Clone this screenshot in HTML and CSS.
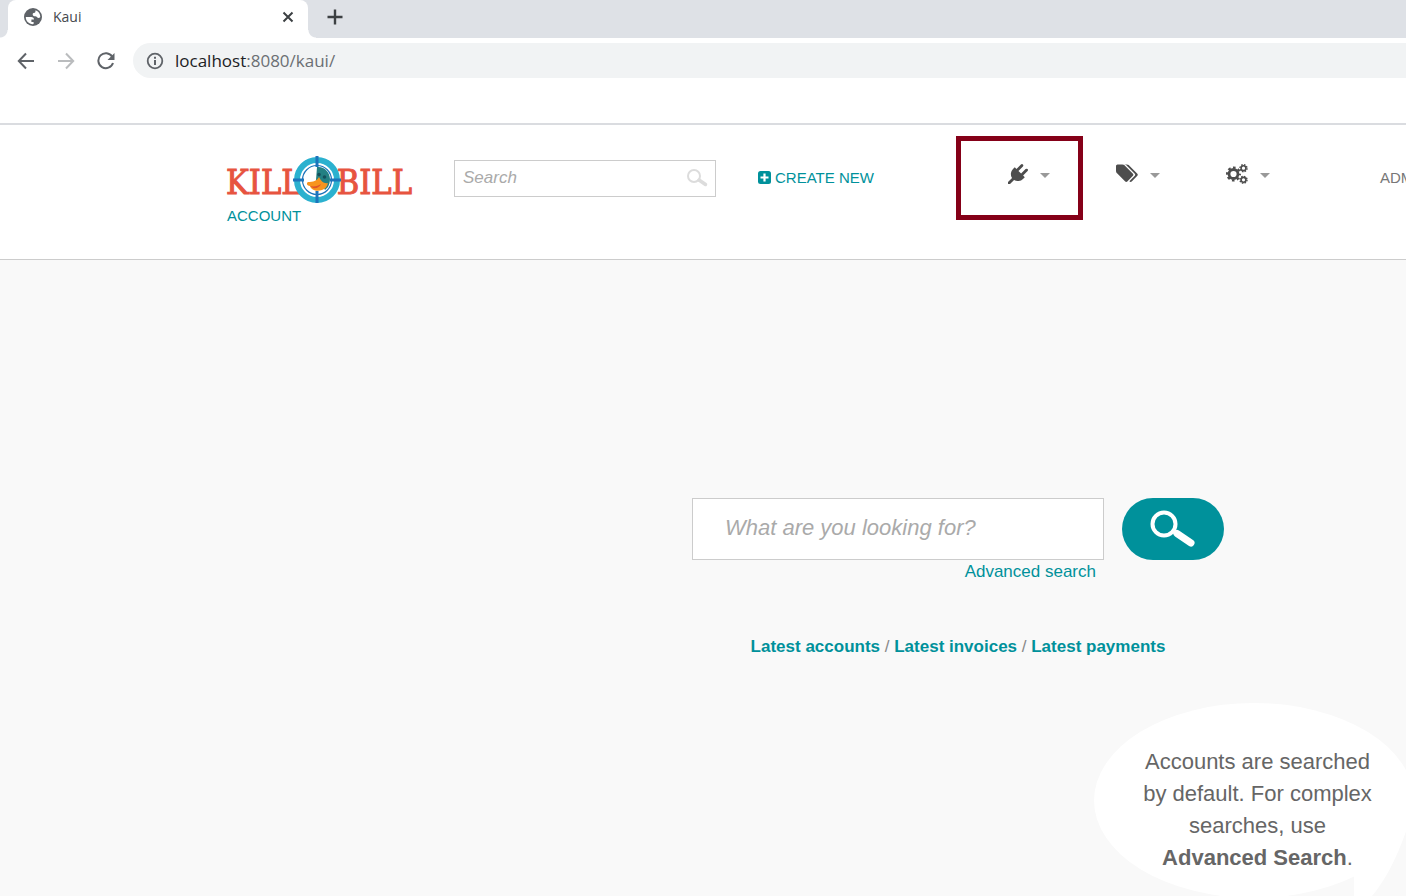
FILE: index.html
```html
<!DOCTYPE html>
<html lang="en">
<head>
<meta charset="utf-8">
<title>Kaui</title>
<link rel="stylesheet" href="styles.css">
</head>
<body>
<div class="browser">
  <div class="tab-strip">
    <div class="tab">
      <svg class="tab-icon" viewBox="0 0 18 18" aria-hidden="true"><circle cx="9" cy="9" r="9" fill="#5f6368"/><path d="M1.800 9h5.400c1.800 0 2.800 1 2.800 2.600H7.400v2.300H9.600v2.200C5 16.500 1.700 13 1.800 9ZM11.500 2.300c3 1 4.800 3.700 4.800 6.700-1 1.400-2.500 1.200-3.200.2-.5-1-1.200-1-2.800-1-2-.1-2.300-3.300.1-3.400.8 0 1.100-.6 1.100-2.500Z" fill="#fff"/></svg>
      <span class="tab-title">Kaui</span>
      <button class="icon-button" aria-label="Close tab"><svg width="12" height="12" viewBox="0 0 12 12"><path d="M1.500 1.500l9 9M10.500 1.500l-9 9" stroke="#3c4043" stroke-width="2"/></svg></button>
    </div>
    <button class="icon-button new-tab" aria-label="New tab"><svg width="16" height="16" viewBox="0 0 16 16"><path d="M8 .5v15M.5 8h15" stroke="#3c4043" stroke-width="2.400"/></svg></button>
  </div>
  <div class="toolbar">
    <button class="icon-button" aria-label="Back"><svg width="18" height="18" viewBox="0 0 18 18"><path d="M17 9H2M9 1.500L1.800 9 9 16.500" fill="none" stroke="#5f6368" stroke-width="2"/></svg></button>
    <button class="icon-button" aria-label="Forward"><svg width="18" height="18" viewBox="0 0 18 18"><path d="M1 9h15M9 1.500L16.200 9 9 16.500" fill="none" stroke="#babcbe" stroke-width="2"/></svg></button>
    <button class="icon-button" aria-label="Reload"><svg width="18" height="18" viewBox="0 0 18 18"><path d="M15.200 4.600A7.500 7.500 0 1 0 16 11" fill="none" stroke="#5f6368" stroke-width="2"/><path d="M17.500 1v7h-7Z" fill="#5f6368"/></svg></button>
    <div class="address">
      <svg width="18" height="18" viewBox="0 0 18 18" aria-hidden="true"><circle cx="9" cy="9" r="7.300" fill="none" stroke="#5f6368" stroke-width="1.800"/><path d="M9 8v5M9 4.800v2" stroke="#5f6368" stroke-width="2"/></svg>
      <span>localhost<span class="address-path">:8080/kaui/</span></span>
    </div>
  </div>
</div>
<header class="site-header">
  <div class="brand">
    <a href="#" class="logo" aria-label="Kill Bill">
      <svg width="186" height="48" viewBox="0 0 186 48">
        <text class="logo-text" x="-1" y="38">KILL</text>
        <text class="logo-text" x="185" y="38" text-anchor="end">BILL</text>
        <circle cx="90" cy="24" r="20" fill="#fff" stroke="#2bb1cf" stroke-width="6"/>
        <circle cx="90" cy="24" r="14.500" fill="#fff" stroke="#1c75bc" stroke-width="1.200"/>
        <path d="M90 11c7-1 13 5 13 12 0 3-1 6-2 8l-3 3c-2-4-4-7-9-10Z" fill="#238083"/>
        <path d="M92 21c-2 4-6 5-11 5-2 1-1 4 2 4 1 4 7 6 12 4 3-1 5-3 6-7-4 1-7-2-9-6Z" fill="#f7941e"/>
        <path d="M83 30c4 1 8 0 11-2-1 3-5 5-8 4Z" fill="#e0542a"/>
        <circle cx="92" cy="18.500" r="1.800" fill="#154f5b"/><circle cx="97.500" cy="21" r="1.800" fill="#154f5b"/>
        <path d="M90 0v11M90 35v12M66 24h11M103 24h11" stroke="#1c75bc" stroke-width="3"/>
      </svg>
    </a>
    <a href="#" class="account">ACCOUNT</a>
  </div>
  <form class="quick-search">
    <input type="search" placeholder="Search" aria-label="Search">
    <button class="icon-button" aria-label="Submit search"><svg width="22" height="18" viewBox="0 0 22 18"><circle cx="8" cy="7" r="6" fill="none" stroke="#dcdcdc" stroke-width="2"/><path d="M13 11l6.500 4.500" stroke="#dcdcdc" stroke-width="3.500" stroke-linecap="round"/></svg></button>
  </form>
  <a href="#" class="create"><svg width="13" height="13" viewBox="0 0 13 13" aria-hidden="true"><rect width="13" height="13" rx="2.500" fill="#00919b"/><path d="M6.500 2.500v8M2.500 6.500h8" stroke="#fff" stroke-width="2.200"/></svg>CREATE NEW</a>
  <nav class="menus">
    <button class="menu highlighted" aria-label="Plugins"><svg width="20" height="20" viewBox="0 0 1792 1792"><path transform="translate(0 1536) scale(1 -1)" d="M1755 1083q37 -38 37 -90.500t-37 -90.500l-401 -400l150 -150l-160 -160q-163 -163 -389.500 -186.500t-411.500 100.500l-362 -362h-181v181l362 362q-124 185 -100.500 411.500t186.500 389.500l160 160l150 -150l400 401q38 37 91 37t90 -37t37 -90.500t-37 -90.500l-400 -401l234 -234l401 400q38 37 91 37t90 -37z"/></svg><span class="caret"></span></button>
    <button class="menu" aria-label="Tags"><svg width="22" height="20" viewBox="0 0 1920 1745"><path transform="translate(0 1456) scale(1 -1)" d="M448 1088q0 -53 -37.500 -90.500t-90.500 -37.500t-90.500 37.500t-37.500 90.500t37.500 90.500t90.500 37.500t90.500 -37.500t37.500 -90.500zM1515 512q0 -53 -37 -90l-491 -492q-39 -37 -91 -37q-53 0 -90 37l-715 716q-38 37 -64.500 101t-26.500 117v416q0 52 38 90t90 38h416q53 0 117 -26.500t102 -64.500l715 -714q37 -39 37 -91zM1899 512q0 -53 -37 -90l-491 -492q-39 -37 -91 -37q-36 0 -59 14t-53 45l470 470q37 37 37 90q0 52 -37 91l-715 714q-38 38 -102 64.500t-117 26.500h224q53 0 117 -26.500t102 -64.500l715 -714q37 -39 37 -91z"/></svg><span class="caret"></span></button>
    <button class="menu" aria-label="Settings"><svg width="22" height="20" viewBox="0 0 22 20"><g fill="none" stroke="#4d4d4d"><circle cx="7.500" cy="10" r="4.500" stroke-width="2.800"/><circle cx="7.500" cy="10" r="6.400" stroke-width="2.200" stroke-dasharray="2.600 2.427" stroke-dashoffset="1.300"/><circle cx="17.500" cy="4.200" r="2.400" stroke-width="1.600"/><circle cx="17.500" cy="4.200" r="3.500" stroke-width="1.400" stroke-dasharray="1.500 1.249"/><circle cx="17.500" cy="15.800" r="2.400" stroke-width="1.600"/><circle cx="17.500" cy="15.800" r="3.500" stroke-width="1.400" stroke-dasharray="1.500 1.249"/></g></svg><span class="caret"></span></button>
  </nav>
  <a href="#" class="user">ADMIN</a>
</header>
<main class="home">
  <form class="hero-search">
    <div class="hero-field">
      <input type="search" placeholder="What are you looking for?" aria-label="What are you looking for?">
      <a href="#">Advanced search</a>
    </div>
    <button class="hero-button" aria-label="Search"><svg width="48" height="38" viewBox="0 0 48 38"><circle cx="15" cy="14" r="11.500" fill="none" stroke="#fff" stroke-width="4"/><path d="M23 20l5 3.500" stroke="#fff" stroke-width="4.500"/><path d="M28 23.500l14 9.500" stroke="#fff" stroke-width="7" stroke-linecap="round"/></svg></button>
  </form>
  <p class="latest"><a href="#">Latest accounts</a> / <a href="#">Latest invoices</a> / <a href="#">Latest payments</a></p>
  <aside class="bubble">
    <svg class="bubble-shape" viewBox="0 0 320 210" aria-hidden="true"><ellipse cx="160" cy="97.500" rx="160" ry="97.500" fill="#fff"/><path d="M260 165V210C288 190 306 150 318 110Z" fill="#fff"/></svg>
    <p>Accounts are searched<br>by default. For complex<br>searches, use<br><strong>Advanced Search</strong>.</p>
  </aside>
</main>
</body>
</html>
```
FILE: styles.css
```css
* { box-sizing: border-box; }
body {
  margin: 0;
  min-height: 100vh;
  display: flex;
  flex-direction: column;
  overflow: hidden;
  background: #f9f9f9;
  color: #666;
  font-family: "Liberation Sans", Arial, sans-serif;
  font-size: 15px;
}
a { color: #00919b; text-decoration: none; }
svg { display: block; flex: none; }
button { font: inherit; cursor: pointer; }
input { font: inherit; appearance: none; border-radius: 0; outline: none; }
input::placeholder { color: #aaa; font-style: italic; opacity: 1; }
.icon-button { display: block; padding: 0; border: 0; background: none; }

.browser {
  background: #fff;
  border-bottom: 2px solid #dadce0;
  padding-bottom: 45px;
  font-family: "Open Sans", "Noto Sans", sans-serif;
}
.tab-strip {
  display: flex;
  align-items: center;
  height: 38px;
  padding-left: 8px;
  background: #dee1e6;
}
.tab {
  position: relative;
  display: flex;
  align-items: center;
  width: 300px;
  height: 38px;
  padding: 0 14px 4px 16px;
  border-radius: 8px 8px 0 0;
  background: #fff;
}
.tab::before,
.tab::after {
  content: "";
  position: absolute;
  bottom: 0;
  width: 8px;
  height: 8px;
}
.tab::before { right: 100%; background: radial-gradient(circle at 0 0, #dee1e6 7px, #fff 8px); }
.tab::after { left: 100%; background: radial-gradient(circle at 100% 0, #dee1e6 7px, #fff 8px); }
.tab-icon { width: 18px; height: 18px; }
.tab-title { flex: 1; padding: 0 0 2px 11px; font-size: 14px; color: #45494d; }
.new-tab { margin: 0 0 4px 19px; }
.toolbar {
  display: flex;
  align-items: center;
  gap: 22px;
  padding: 5px 0 0 17px;
}
.address {
  flex: 1;
  display: flex;
  align-items: center;
  gap: 11px;
  height: 35px;
  margin-left: -4px;
  padding-left: 13px;
  border-radius: 18px 0 0 18px;
  background: #f1f3f4;
  color: #202124;
  font-size: 17px;
}
.address-path { color: #6b6f73; }

.site-header {
  display: flex;
  align-items: flex-start;
  min-height: 135px;
  padding: 11px 0 0 227px;
  border-bottom: 1px solid #ccc;
  background: #fff;
  white-space: nowrap;
}
.site-header > * { flex: none; }
.brand { padding-top: 20px; }
.logo { display: block; }
.logo svg { overflow: visible; }
.logo-text {
  font-family: "DejaVu Serif Condensed", "DejaVu Serif", serif;
  font-stretch: condensed;
  font-size: 34px;
  fill: #e7543f;
  stroke: #e7543f;
  stroke-width: 1px;
}
.account { display: block; padding-top: 3px; }
.quick-search {
  display: flex;
  align-items: center;
  width: 262px;
  height: 37px;
  margin: 24px 42px 0 41px;
  padding: 0 7px 2px 8px;
  border: 1px solid #ccc;
  font-size: 17px;
}
.quick-search input { flex: 1; min-width: 0; padding: 0; border: 0; background: none; }
.create, .user { display: flex; align-items: center; gap: 4px; height: 82px; }
.menus { display: flex; align-items: flex-start; margin-left: 82px; }
.menu {
  display: flex;
  align-items: center;
  gap: 12px;
  height: 84px;
  width: 110px;
  padding: 0 0 8px;
  border: 0;
  background: none;
}
.menu svg { fill: #4d4d4d; }
.highlighted {
  width: 127px;
  margin-right: 33px;
  padding-left: 47px;
  border: 5px solid #850018;
}
.caret { border: 5px solid transparent; border-top-color: #999; border-bottom: 0; margin-top: 2px; }
.user { margin-left: 44px; color: #777; }

.home {
  display: flex;
  flex-direction: column;
  align-items: center;
  padding: 238px 0 0 510px;
}
.hero-search { display: flex; align-items: flex-start; gap: 18px; }
.hero-field { display: flex; flex-direction: column; align-items: flex-end; font-size: 17px; }
.hero-field input {
  width: 412px;
  height: 62px;
  padding: 0 32px 2px;
  border: 1px solid #ccc;
  background: #fff;
  font-size: 22px;
}
.hero-field a { padding: 2px 8px 0 0; }
.hero-button {
  display: flex;
  align-items: center;
  justify-content: center;
  width: 102px;
  height: 62px;
  padding: 0;
  border: 0;
  border-radius: 31px;
  background: #00919b;
}
.latest { margin: 54px 0 45px; color: #888; font-size: 17px; line-height: 22px; }
.latest a { font-weight: bold; }
.bubble {
  position: relative;
  align-self: flex-end;
  width: 320px;
  height: 195px;
  margin-right: -8px;
}
.bubble-shape { position: absolute; top: 0; left: 0; width: 320px; height: 210px; }
.bubble p {
  position: relative;
  margin: 0;
  padding: 43px 0 0 7px;
  font-size: 22px;
  line-height: 32px;
  text-align: center;
  white-space: nowrap;
}
```
